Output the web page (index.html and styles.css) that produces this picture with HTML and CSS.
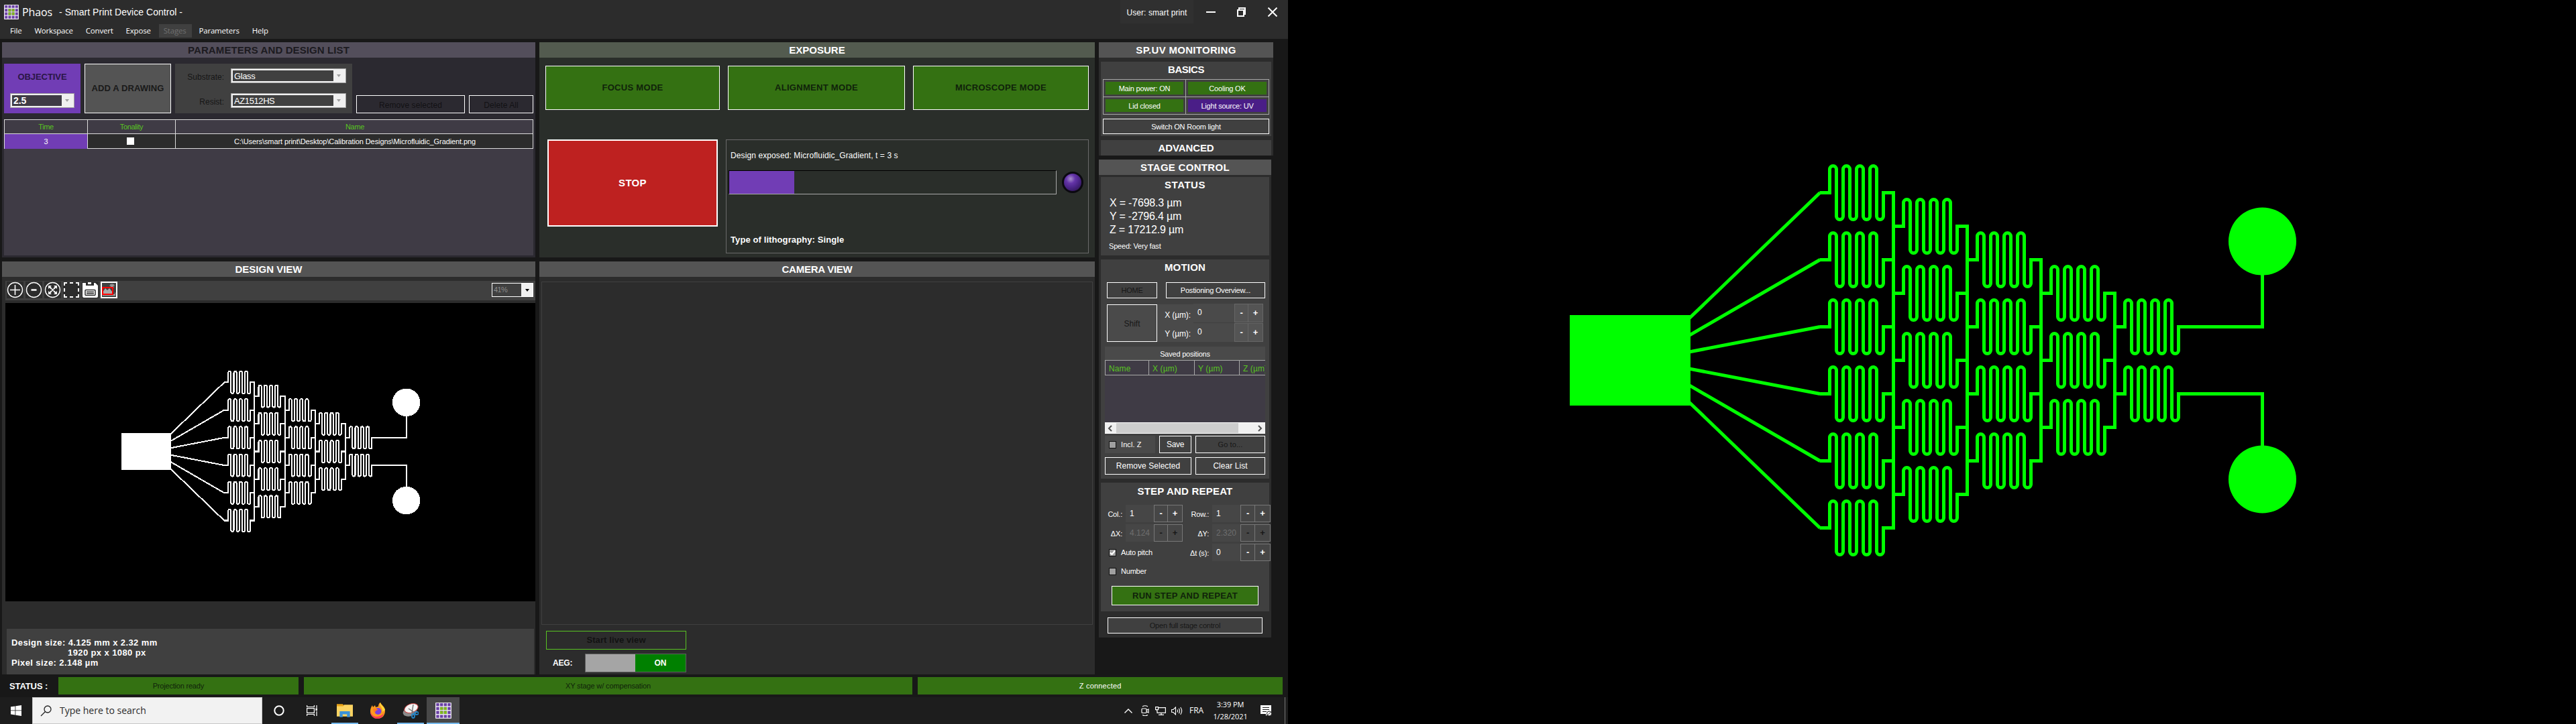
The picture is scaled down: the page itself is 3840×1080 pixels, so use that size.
FILE: index.html
```html
<!DOCTYPE html>
<html lang="en">
<head>
<meta charset="utf-8">
<title>Phaos - Smart Print Device Control</title>
<link rel="stylesheet" href="styles.css">
</head>
<body>
<svg class="defs" width="0" height="0">
  <defs>
    <path id="mixer" d="M-15 0H0V-35a5 5 0 0 1 10 0V35a5 5 0 0 0 10 0V-35a5 5 0 0 1 10 0V35a5 5 0 0 0 10 0V-35a5 5 0 0 1 10 0V35a5 5 0 0 0 10 0V-35a5 5 0 0 1 10 0V35a5 5 0 0 0 10 0V0H95"/>
    <symbol id="chip" viewBox="0 0 1920 1080" preserveAspectRatio="none">
      <rect x="420" y="470" width="180" height="135" fill="currentColor"/>
      <circle cx="1452.5" cy="360" r="50.5" fill="currentColor"/>
      <circle cx="1452.5" cy="715" r="50.5" fill="currentColor"/>
      <g fill="none" stroke="currentColor" stroke-width="5">
        <path d="M598 475L793 287.500M598 500.300L793 387.500M598 525L793 487.500M598 550L793 587.500M598 574.700L793 687.500M598 600L793 787.500"/>
        <path stroke-linecap="square" d="M902.500 287.500V787.500M1012.500 337.500V737.500M1122.500 387.500V687.500M1232.500 437.500V637.500"/>
        <path d="M1327.500 487.500H1452.500V400M1327.500 587.500H1452.500V675"/>
        <use href="#mixer" x="807.5" y="287.5"/><use href="#mixer" x="807.5" y="387.5"/><use href="#mixer" x="807.5" y="487.5"/><use href="#mixer" x="807.5" y="587.5"/><use href="#mixer" x="807.5" y="687.5"/><use href="#mixer" x="807.5" y="787.5"/>
        <use href="#mixer" x="917.5" y="337.5"/><use href="#mixer" x="917.5" y="437.5"/><use href="#mixer" x="917.5" y="537.5"/><use href="#mixer" x="917.5" y="637.5"/><use href="#mixer" x="917.5" y="737.5"/>
        <use href="#mixer" x="1027.5" y="387.5"/><use href="#mixer" x="1027.5" y="487.5"/><use href="#mixer" x="1027.5" y="587.5"/><use href="#mixer" x="1027.5" y="687.5"/>
        <use href="#mixer" x="1137.5" y="437.5"/><use href="#mixer" x="1137.5" y="537.5"/><use href="#mixer" x="1137.5" y="637.5"/>
        <use href="#mixer" x="1247.5" y="487.5"/><use href="#mixer" x="1247.5" y="587.5"/>
      </g>
    </symbol>
    <symbol id="logo" viewBox="0 0 24 24">
      <rect width="24" height="24" rx="1" fill="#e8e4ee"/>
      <path d="M3.500 1v22M9.200 1v22M14.900 1v22M20.500 1v22" stroke="#6a3fa5" stroke-width="4.300" stroke-dasharray="4.300 1.500"/>
      <path d="M9.200 6.800v10.100M14.900 6.800v10.100" stroke="#7fb51f" stroke-width="4.300" stroke-dasharray="4.300 1.500"/>
    </symbol>
  </defs>
</svg>

<main class="desktop">
  <header class="titlebar">
    <div class="title-row">
      <svg class="app-logo"><use href="#logo"/></svg>
      <span class="app-name">Phaos</span>
      <span class="app-sub">- Smart Print Device Control -</span>
      <span class="user">User: smart print</span>
      <svg class="winbtns" viewBox="0 0 106 14" fill="none" stroke="#fff" stroke-width="2"><path d="M0 7H14"/><path d="M47 4h9v9h-9zM49 3.500V1h9v9h-2"/><path d="M92.500 .5l13 13M105.500 .5l-13 13"/></svg>
    </div>
    <nav class="menu"><span>File</span><span>Workspace</span><span>Convert</span><span>Expose</span><span class="open">Stages</span><span>Parameters</span><span>Help</span></nav>
  </header>

  <div class="workspace">
    <div class="column col-left">
      <section class="panel params">
        <h2>PARAMETERS AND DESIGN LIST</h2>
        <div class="param-row">
          <div class="objective"><b>OBJECTIVE</b><div class="combo"><span class="combo-value">2.5</span><i class="tri"></i></div></div>
          <button class="add">ADD A DRAWING</button>
          <div class="materials">
            <label>Substrate:</label><div class="combo"><span class="combo-value">Glass</span><i class="tri"></i></div>
            <label>Resist:</label><div class="combo"><span class="combo-value">AZ1512HS</span><i class="tri"></i></div>
          </div>
          <button class="ghost remove">Remove selected</button>
          <button class="ghost delete">Delete All</button>
        </div>
        <div class="design-table">
          <div class="tr th"><span>Time</span><span>Tonality</span><span>Name</span></div>
          <div class="tr"><span class="time">3</span><span><i class="tone"></i></span><span>C:\Users\smart print\Desktop\Calibration Designs\Microfluidic_Gradient.png</span></div>
        </div>
      </section>
      <section class="panel design">
        <h2>DESIGN VIEW</h2>
        <div class="toolbar">
          <svg viewBox="0 0 25 25" fill="none" stroke="#fff" stroke-width="1.400"><circle cx="12.500" cy="12.500" r="11"/><path stroke-width="1.600" d="M12.500 5v15M5 12.500h15"/></svg>
          <svg viewBox="0 0 25 25" fill="none" stroke="#fff" stroke-width="1.400"><circle cx="12.500" cy="12.500" r="11"/><path stroke-width="2.500" d="M8.500 12.500h8"/></svg>
          <svg viewBox="0 0 25 25" fill="none" stroke="#fff" stroke-width="1.400"><circle cx="12.500" cy="12.500" r="11"/><path stroke-width="2" d="M7 7l4 4M18 7l-4 4M7 18l4-4M18 18l-4-4"/><path fill="#fff" stroke="none" d="M6 6h5l-5 5zM19 6v5l-5-5zM6 19v-5l5 5zM19 19h-5l5-5zM12.500 10.500l2 2-2 2-2-2z"/></svg>
          <svg viewBox="0 0 25 25" fill="none" stroke="#fff" stroke-width="2"><path d="M2 6V2h4M10 2h5M19 2h4v4M23 10v5M23 19v4h-4M15 23h-5M6 23H2v-4M2 15v-5"/></svg>
          <svg viewBox="0 0 25 25"><path fill="#fff" d="M1 2h5v4h12V2h2l4 4v16q0 2-2 2H3q-2 0-2-2z"/><path fill="#fff" d="M9 1h5v3H9z"/><rect x="5" y="12.500" width="15" height="8" rx="1" fill="#fff" stroke="#2c2c2c" stroke-width="1.500"/><path stroke="#2c2c2c" stroke-width="1.500" d="M7 15.500h11M7 18h11"/></svg>
          <svg viewBox="0 0 25 25"><rect x="1" y="1" width="23" height="23" fill="#404040" stroke="#fff" stroke-width="2"/><path stroke="#999" stroke-width="1.300" d="M17 3v7M13.500 6h7M14.500 4l5 5M19.500 4l-5 5"/><path fill="#aaa" d="M3 16l4-6 3 3 3-3 5 6v2H3zM3 19h18v-3l1 1v4H3z"/><rect x="3" y="9" width="15" height="10" fill="none" stroke="#f00" stroke-width="2"/></svg>
          <div class="zoom"><span>41%</span><i class="tri"></i></div>
        </div>
        <svg class="preview" viewBox="0 0 1920 1080" preserveAspectRatio="none"><use href="#chip" width="1920" height="1080"/></svg>
        <div class="info"><span>Design size: 4.125 mm x 2.32 mm</span><span class="indent">1920 px x 1080 px</span><span>Pixel size: 2.148 µm</span></div>
      </section>
    </div>

    <div class="column col-mid">
      <section class="panel exposure">
        <h2>EXPOSURE</h2>
        <div class="modes"><button>FOCUS MODE</button><button>ALIGNMENT MODE</button><button>MICROSCOPE MODE</button></div>
        <div class="expose-row">
          <button class="stop">STOP</button>
          <div class="job">
            <span>Design exposed: Microfluidic_Gradient, t = 3 s</span>
            <div class="job-progress"><div class="track"><div class="fill" style="width:20%"></div></div><i class="led"></i></div>
            <b>Type of lithography: Single</b>
          </div>
        </div>
      </section>
      <section class="panel camera">
        <h2>CAMERA VIEW</h2>
        <div class="feed"></div>
        <button class="live">Start live view</button>
        <div class="aeg"><b>AEG:</b><div class="toggle"><i></i><span>ON</span></div></div>
      </section>
    </div>

    <div class="column col-right">
      <section class="panel monitoring">
        <h2>SP.UV MONITORING</h2>
        <div class="box basics">
          <h3>BASICS</h3>
          <div class="lamps">
            <div><span>Main power: ON</span></div><div><span>Cooling OK</span></div>
            <div><span>Lid closed</span></div><div><span class="uv">Light source: UV</span></div>
          </div>
          <button class="ghost room">Switch ON Room light</button>
        </div>
        <div class="box advanced"><h3>ADVANCED</h3></div>
      </section>
      <section class="panel stage">
        <h2>STAGE CONTROL</h2>
        <div class="box position">
          <h3>STATUS</h3>
          <span class="axis">X = -7698.3 µm</span><span class="axis">Y = -2796.4 µm</span><span class="axis">Z = 17212.9 µm</span>
          <span class="speed">Speed: Very fast</span>
        </div>
        <div class="box motion">
          <h3>MOTION</h3>
          <div class="motion-top"><button class="ghost off home">HOME</button><button class="ghost overview">Postioning Overview...</button></div>
          <div class="shift-row">
            <button class="shift">Shift</button>
            <div class="shift-labels"><span>X (µm):</span><span>Y (µm):</span></div>
            <div class="shift-inputs"><div class="spin"><span>0</span><b>-</b><b>+</b></div><div class="spin"><span>0</span><b>-</b><b>+</b></div></div>
          </div>
          <div class="saved">
            <div class="saved-title">Saved positions</div>
            <div class="saved-head"><span>Name</span><span>X (µm)</span><span>Y (µm)</span><span>Z (µm)</span></div>
            <div class="saved-body"></div>
            <div class="scroll"><svg viewBox="0 0 8 10"><path d="M6 1L2 5l4 4" fill="none" stroke="#505050" stroke-width="2"/></svg><i></i><svg viewBox="0 0 8 10"><path d="M2 1l4 4-4 4" fill="none" stroke="#505050" stroke-width="2"/></svg></div>
          </div>
          <div class="save-row"><label><i class="check"></i><span>Incl. Z</span></label><button class="ghost save">Save</button><button class="ghost off">Go to...</button></div>
          <div class="list-row"><button class="ghost">Remove Selected</button><button class="ghost">Clear List</button></div>
        </div>
        <div class="box repeat">
          <h3>STEP AND REPEAT</h3>
          <div class="repeat-grid">
            <span class="lbl">Col.:</span><div class="spin"><span>1</span><b>-</b><b>+</b></div>
            <span class="lbl">Row.:</span><div class="spin wide"><span>1</span><b>-</b><b>+</b></div>
            <span class="lbl">ΔX:</span><div class="spin dim"><span>4.1249</span><b>-</b><b>+</b></div>
            <span class="lbl">ΔY:</span><div class="spin wide dim"><span>2.3203</span><b>-</b><b>+</b></div>
            <label><i class="check"><svg viewBox="0 0 9 9"><path d="M1 4.500L3.500 7 8 1.500" fill="none" stroke="#fff" stroke-width="2"/></svg></i><span>Auto pitch</span></label>
            <span class="lbl">Δt (s):</span><div class="spin wide"><span>0</span><b>-</b><b>+</b></div>
          </div>
          <label class="number"><i class="check"></i><span>Number</span></label>
          <button class="run">RUN STEP AND REPEAT</button>
        </div>
        <button class="ghost off fullstage">Open full stage control</button>
      </section>
    </div>
  </div>

  <div class="statusbar"><b>STATUS :</b><span class="projection-state">Projection ready</span><span class="xy-state">XY stage w/ compensation</span><span class="z-state">Z connected</span></div>

  <footer class="taskbar">
    <svg class="start" viewBox="0 0 16 16" fill="#fff"><path d="M0 2.300l6.500-.9v6.100H0zM7.300 1.300L16 0v7.500H7.300zM0 8.300h6.500v6.200L0 13.600zM7.300 8.300H16V16l-8.700-1.300z"/></svg>
    <div class="search"><svg viewBox="0 0 17 17" fill="none" stroke="#222" stroke-width="1.300"><circle cx="11" cy="6" r="5"/><path d="M7.500 9.500L1 16"/></svg><span>Type here to search</span></div>
    <div class="task"><svg viewBox="0 0 16 16"><circle cx="8" cy="8" r="6.700" fill="none" stroke="#fff" stroke-width="2"/></svg></div>
    <div class="task"><svg viewBox="0 0 16 16" fill="none" stroke="#fff" stroke-width="1.200"><path d="M.6 0v2.500h10.800V0M.6 16v-2.500h10.800V16M.6 4.700h10.800v6.600H.6zM15 0v4M15 9v7"/><path fill="#fff" d="M14 5h2v2.500h-2z"/></svg></div>
    <div class="task running"><svg class="big" viewBox="0 0 22 18"><path fill="#e8a317" d="M0 0h8l2 2v4H0z"/><path fill="#fcd462" d="M0 3h9l1-2h12v16H0z"/><path fill="#3b92d8" d="M4 10h14v8h-4v-4H8v4H4z"/></svg></div>
    <div class="task"><svg class="big" viewBox="0 0 24 24"><path fill="#ff9a1f" d="M12 24C5 24 1 19 1 13c0-3 1-6 3-9l1 3 3-3 1 3q3-1 4-1c0-3 1-5 3-6 1 3 7 6 7 12 0 7-4 12-11 12z"/><path fill="#ff3b53" d="M12 24C5 24 1 19 1 13q2 7 8 8 8 0 12-5-2 8-9 8z"/><path fill="#ffd93c" d="M15 1c0 5 5 6 4 13l4-3C22 6 17 5 16 0z"/><circle cx="12.500" cy="13" r="5" fill="#7a3fe0"/><path fill="#ff7b20" d="M5 9q5-1 8 2-4 0-5 4-3-2-3-6z"/></svg></div>
    <div class="task running"><svg class="big" viewBox="0 0 24 24"><ellipse cx="11" cy="14" rx="10.500" ry="6.500" fill="#8b8b8b" transform="rotate(-12 11 14)"/><ellipse cx="13" cy="8.500" rx="10.500" ry="6.500" fill="#f4f4f4" stroke="#c84040" transform="rotate(-20 13 8.500)"/><path stroke="#777" stroke-width="1.500" d="M16 3l-2 13M9 9l9 6"/><g fill="none" stroke="#2383c4" stroke-width="1.800"><ellipse cx="16" cy="20" rx="2" ry="3"/><ellipse cx="21" cy="16" rx="3" ry="2"/></g></svg></div>
    <div class="task current"><svg class="big"><use href="#logo"/></svg></div>
    <div class="tray">
      <svg class="chev" viewBox="0 0 12 7" fill="none" stroke="#fff" stroke-width="1.400"><path d="M.5 6.500L6 1l5.500 5.500"/></svg>
      <svg class="meet" viewBox="0 0 12 16" fill="none" stroke="#fff" stroke-width="1.200"><rect x="1" y="5" width="7" height="6.500" rx="1"/><path d="M8 7.500l3-1.500v5l-3-1.500M2 2q4-2.500 8 0M2 14.500q4 2.500 8 0"/></svg>
      <svg class="net" viewBox="0 0 16 13" fill="none" stroke="#fff" stroke-width="1.200"><path d="M5 1.600h10.400v7.800H3V6M9 9.400V12M5 12.400h8M.6.6h4v4h-4zM2.600 4.600V7"/></svg>
      <svg class="vol" viewBox="0 0 17 13" fill="none" stroke="#fff" stroke-width="1.100"><path d="M.6 4.500H3L6.500 1v11L3 8.500H.6zM9 4.500q1.300 2 0 4M11.300 2.700q2.500 3.800 0 7.600M13.700 1q4 5.500 0 11"/></svg>
      <span class="lang">FRA</span>
      <div class="clock"><span>3:39 PM</span><span>1/28/2021</span></div>
      <svg class="notif" viewBox="0 0 17 17"><path fill="#fff" d="M0 0h16v13h-5l-3 3v-3H0z"/><path stroke="#1d1d1d" stroke-width="1.200" d="M3 3.500h10M3 6.500h10M3 9.500h6"/><circle cx="13" cy="12.500" r="3.500" fill="#fff" stroke="#1d1d1d"/><path stroke="#1d1d1d" d="M11 14.500l4-4"/></svg>
    </div>
  </footer>
</main>

<svg class="projection" viewBox="0 0 1920 1080"><use href="#chip" width="1920" height="1080"/></svg>
</body>
</html>
```
FILE: styles.css
```css
* { box-sizing: border-box; }
body { margin: 0; width: 3840px; height: 1080px; overflow: hidden; display: flex; background: #000; color: #fff; font: 11px/16px "Liberation Sans", Arial, sans-serif; letter-spacing: -.2px; white-space: nowrap; }
.defs { position: absolute; }
h2, h3 { margin: 0; text-align: center; font-weight: bold; }
i { font-style: normal; }
button { font: inherit; letter-spacing: inherit; color: inherit; padding: 0; border: 1px solid #fff; border-radius: 0; background: #404040; display: flex; align-items: center; justify-content: center; white-space: nowrap; }
svg { display: block; flex: none; }

.desktop { width: 1920px; height: 1080px; display: flex; flex-direction: column; background: #181818; }
.projection { width: 1920px; height: 1080px; color: #0f0; background: #000; }

/* Title bar and menu */
.titlebar { height: 58px; background: #2c2c2c; }
.title-row { height: 36px; padding-left: 6px; display: flex; align-items: center; }
.app-logo { width: 22px; height: 22px; }
.app-name { margin-left: 5px; width: 55px; font: 16px/22px "Open Sans", sans-serif; letter-spacing: -.1px; }
.app-sub { font-size: 14px; letter-spacing: .04px; }
.user { margin-left: auto; width: 109px; height: 35px; background: #303030; display: flex; align-items: center; justify-content: center; align-self: flex-start; padding-top: 3px; font-size: 12px; letter-spacing: .08px; }
.winbtns { width: 106px; height: 14px; margin: 0 16px 0 19px; }
.menu { display: flex; gap: 19px; padding-left: 15px; height: 20px; font: 11.5px/20px "Open Sans", sans-serif; letter-spacing: -.2px; }
.menu .open { background: #404040; color: #707070; padding: 0 9px 0 7px; margin: 0 -9px 0 -7px; }

/* Workspace */
.workspace { flex: none; height: 948px; padding: 5px 0 0 3px; display: flex; gap: 6px; }
.column { display: flex; flex-direction: column; gap: 6px; }
.col-left { width: 795px; }
.col-mid { width: 828px; }
.col-right { width: 260px; }
.panel { background: #2c2c2c; }
.panel > h2 { height: 23px; background: #545454; font-size: 15px; line-height: 24px; letter-spacing: 0; }
.params, .exposure { height: 321px; }
.design, .camera { height: 616px; }

.combo { border: 1px solid #a0a0a0; background: #f0f0f0; padding: 2px; height: 22px; display: flex; align-items: center; }
.combo-value { flex: 1; height: 16px; background: #404040; font-size: 13px; line-height: 17px; padding-left: 2px; letter-spacing: -.4px; }
.tri { width: 16px; display: flex; justify-content: center; }
.tri::after { content: ""; border: 3px solid transparent; border-top: 4px solid #a0a0a0; border-bottom: 0; }

.params { background: #2b2930; }
.params > h2 { background: #534e5b; color: #1c1a20; letter-spacing: .1px; }
.param-row { display: flex; gap: 6px; padding: 9px 3px; height: 92px; align-items: flex-end; }
.objective { width: 114px; height: 74px; background: #713db5; color: #2a1646; padding: 12px 9px 8px; display: flex; flex-direction: column; justify-content: space-between; text-align: center; font-size: 13px; letter-spacing: -.08px; }
.objective .combo { color: #fff; text-align: left; }
.objective .combo-value { background: #3f3b45; font-size: 14px; font-weight: bold; letter-spacing: -.1px; }
.add { width: 129px; height: 74px; background: #545454; color: #1a1a1a; font-size: 13px; font-weight: bold; letter-spacing: .1px; }
.materials { width: 264px; height: 74px; background: #404040; color: #161616; display: grid; grid-template-columns: 73px 172px; grid-auto-rows: 22px; gap: 15px 10px; padding-top: 7px; font-size: 12px; letter-spacing: 0; }
.materials label { text-align: right; line-height: 26px; }
.materials .combo { color: #fff; }
.ghost { background: transparent; }
.params .ghost { height: 27px; color: #121114; font-size: 12px; letter-spacing: .08px; padding-top: 3px; }
.remove { width: 162px; }
.delete { width: 96px; }
.design-table { margin: 0 3px; height: 203px; background: #3f3b45; letter-spacing: -.1px; }
.tr { display: grid; grid-template-columns: 123px 131px 535px; height: 22px; border: 1px solid #dcdcdc; border-top: 0; background: #2c2c2c; text-align: center; line-height: 22px; }
.tr.th { background: #3f3b45; color: #58c322; border-top: 1px solid #dcdcdc; line-height: 20px; letter-spacing: -.35px; }
.tr span + span { border-left: 1px solid #dcdcdc; }
.tr .time { background: #713db5; }
.tone { display: block; width: 11px; height: 11px; background: #fff; margin: 5px auto 0 58px; }

.toolbar { margin: 6px 0 0 5px; height: 29px; background: #404040; display: flex; align-items: center; gap: 3px; padding: 0 3px 2px 2px; }
.toolbar > svg { width: 25px; height: 25px; background: #2c2c2c; }
.zoom { margin-left: auto; width: 62px; height: 21px; border: 1px solid #fff; background: #404040; color: #8c8c8c; display: flex; justify-content: space-between; padding-left: 2px; line-height: 19px; letter-spacing: -.6px; }
.zoom .tri { width: 17px; background: #f0f0f0; align-items: center; }
.zoom .tri::after { border-top-color: #000; }
.preview { margin: 4px 0 0 5px; width: 790px; height: 445px; background: #000; shape-rendering: crispEdges; }
.info { margin: 41px 2px 0 7px; height: 68px; background: #404040; padding: 13px 0 0 7px; display: flex; flex-direction: column; font-size: 13px; font-weight: bold; line-height: 15px; letter-spacing: .4px; }
.info .indent { padding-left: 84px; }

.exposure { background: #2a2e2a; }
.exposure > h2 { background: #535b4f; }
.modes { display: grid; grid-template-columns: 260px 264px 262px; gap: 12px; padding: 12px 9px 0; height: 122px; grid-auto-rows: 66px; }
.modes button { background: #347112; color: #10230a; font-size: 13px; font-weight: bold; letter-spacing: .3px; }
.expose-row { display: flex; gap: 12px; padding-left: 12px; }
.stop { width: 254px; height: 130px; border-width: 2px; background: #be2120; font-size: 15px; font-weight: bold; letter-spacing: .3px; }
.job { width: 541px; height: 170px; border: 1px solid #6a6a6a; padding: 15px 7px 11px 3px; display: flex; flex-direction: column; justify-content: space-between; font-size: 12px; letter-spacing: .1px; }
.job > span, .job > b { padding-left: 3px; }
.job > b { font-size: 13px; }
.job-progress { display: flex; align-items: center; gap: 8px; margin-bottom: 46px; }
.track { width: 489px; height: 36px; border: 1px solid #aaa; border-top-color: #000; border-left-color: #000; }
.fill { height: 100%; background: #713db5; }
.led { width: 32px; height: 32px; border-radius: 50%; border: 3px solid #0b0910; background: radial-gradient(circle at 38% 30%, #a78fca 0, #6434a8 28%, #4a2486 55%, #22103f 100%); }

.camera > h2 { letter-spacing: -.25px; }
.feed { margin: 7px 3px 0; height: 512px; border: 1px solid #404040; }
.live { margin: 9px 0 0 10px; width: 209px; height: 28px; border-color: #58c322; background: #2c2c2c; color: #121212; font-size: 13px; font-weight: bold; letter-spacing: .1px; }
.aeg { margin: 6px 0 0 20px; display: flex; align-items: center; height: 28px; font-size: 12px; }
.aeg > b { width: 48px; }
.toggle { width: 151px; height: 28px; display: flex; border: 1px solid #606060; background: #008000; font-weight: bold; align-items: center; letter-spacing: 0; }
.toggle i { width: 74px; height: 26px; background: #a5a5a5; }
.toggle span { flex: 1; text-align: center; }

/* Monitoring */
.col-right .panel > h2 { letter-spacing: .3px; }
.box { margin: 0 3px; background: #404040; }
.box h3 { font-size: 15px; line-height: 24px; letter-spacing: .2px; }
.box.basics h3 { letter-spacing: -.45px; }
.box.advanced h3 { letter-spacing: -.1px; }
.box.position h3 { letter-spacing: .5px; }
.monitoring { height: 169px; }
.basics { margin-top: 6px; height: 111px; padding: 0 3px; }
.lamps { margin: 2px 0 6px; display: grid; grid-template-columns: 123px 124px; grid-auto-rows: 26px; border: solid #a8a8a8; border-width: 0 1px 1px 0; height: 53px; }
.lamps div { border: solid #a8a8a8; border-width: 1px 0 0 1px; padding: 3px; }
.lamps span { display: block; height: 19px; line-height: 20px; background: #347112; text-align: center; }
.lamps .uv { background: #4a1e87; }
.room { width: 248px; height: 23px; }
.advanced { margin-top: 6px; height: 23px; }

/* Stage control */
.stage { width: 257px; height: 713px; }
.position { margin-top: 3px; height: 117px; display: flex; flex-direction: column; }
.axis { font-size: 16px; line-height: 20px; padding-left: 13px; }
.axis:nth-of-type(1) { margin-top: 5px; }
.speed { margin-top: 6px; padding-left: 12px; }
.motion { margin-top: 6px; height: 327px; padding: 0 6px; }
.off { color: #171717; }
.motion-top { display: flex; justify-content: space-between; padding-left: 3px; margin-top: 10px; }
.motion-top button { height: 24px; }
.home { width: 75px; }
.overview { width: 148px; }
.shift-row { display: flex; margin: 8px 0 0 3px; height: 57px; align-items: flex-end; }
.shift { width: 75px; height: 56px; background: #4a4a4a; color: #171717; padding-top: 2px; font-size: 12px; letter-spacing: 0; }
.shift-labels { width: 54px; height: 56px; background: #4a4a4a; display: flex; flex-direction: column; gap: 12px; padding: 8px 4px 0 0; text-align: right; font-size: 12px; letter-spacing: -.1px; }
.shift-inputs { width: 104px; display: flex; flex-direction: column; gap: 1px; }
.spin { display: grid; grid-template-columns: 1fr 21px 22px; height: 26px; background: #464646; }
.shift-inputs .spin { height: 28px; background: #4a4a4a; }
.spin span { padding-left: 6px; line-height: 26px; overflow: hidden; margin-right: 6px; font-size: 12px; letter-spacing: 0; }
.spin b { border: 1px solid #777; display: flex; align-items: center; justify-content: center; font-size: 13px; }
.shift-inputs b { background: #545454; border-color: #666; }
.spin b + b { margin-left: -1px; }
.spin.dim span { color: #6e6e6e; }
.spin.dim b { color: #161616; }
.saved { margin-top: 7px; height: 130px; background: #3f3b45; display: flex; flex-direction: column; overflow: hidden; }
.saved-title { height: 20px; line-height: 22px; background: #4a4a4a; text-align: center; }
.saved-head { display: flex; height: 23px; border: solid #a8a8a8; border-width: 1px 0; color: #58c322; line-height: 25px; overflow: hidden; font-size: 12px; letter-spacing: .1px; }
.saved-head span { flex: none; width: 67px; border-left: 1px solid #a8a8a8; padding-left: 5px; }
.saved-head span:first-child { width: 65px; }
.saved-head span:nth-child(2) { width: 68px; }
.saved-body { flex: 1; }
.scroll { height: 17px; background: #f0f0f0; display: flex; align-items: center; border: solid #fff; border-width: 1px 0; padding: 0 4px; }
.scroll svg { width: 8px; height: 10px; }
.scroll i { width: 182px; height: 15px; background: #cdcdcd; margin: 0 auto 0 5px; }
.save-row { margin-top: 3px; display: grid; grid-template-columns: 75px 48px 104px; gap: 6px; height: 26px; letter-spacing: .1px; }
.save-row .save { font-size: 12px; letter-spacing: -.3px; }
.save-row label { background: #4a4a4a; display: flex; align-items: center; gap: 7px; padding-left: 6px; }
.check { width: 11px; height: 11px; border: 1px solid #111; background: #a0a0a0; }
.list-row { margin-top: 6px; display: grid; grid-template-columns: 129px 104px; gap: 6px; height: 26px; font-size: 12px; letter-spacing: .05px; }

.repeat { margin-top: 6px; height: 192px; padding-top: 1px; }
.repeat-grid { margin-top: 8px; display: grid; grid-template-columns: 32px 85px 34px 87px; grid-auto-rows: 26px; gap: 3px 5px; }
.repeat-grid .lbl { text-align: right; line-height: 28px; }
.repeat-grid label { grid-column: span 2; }
.repeat label { display: flex; gap: 7px; align-items: center; padding-left: 12px; }
.spin.wide { grid-template-columns: 1fr 22px 23px; }
.number { margin-top: 7px; }
.run { margin: 14px 0 0 16px; width: 219px; height: 29px; background: #347112; color: #10230a; font-size: 13px; font-weight: bold; letter-spacing: .25px; }
.fullstage { margin: 9px 0 0 13px; width: 231px; height: 24px; background: #404040; }

/* Status bar */
.statusbar { height: 34px; flex: none; display: flex; padding: 4px 0 4px 14px; line-height: 27px; }
.statusbar b { width: 73px; font-size: 13px; letter-spacing: -.1px; }
.statusbar span { background: #347112; text-align: center; color: #10230a; margin-right: 8px; }
.projection-state { width: 358px; }
.xy-state { width: 908px; letter-spacing: -.12px; }
.statusbar .z-state { width: 544px; color: #fff; letter-spacing: .2px; }

/* Taskbar */
.taskbar { height: 40px; background: #1d1d1d; display: flex; align-items: center; font-family: "Open Sans", sans-serif; letter-spacing: -.1px; }
.start { width: 16px; height: 16px; margin: 0 16px; }
.search { width: 343px; height: 40px; background: #f2f2f2; border: 1px solid #c8c8c8; color: #2a2a2a; display: flex; align-items: center; gap: 12px; padding-left: 11px; font-size: 14px; letter-spacing: 0; }
.search svg { width: 17px; height: 17px; }
.task { width: 49px; height: 40px; display: flex; align-items: center; justify-content: center; }
.task svg { width: 16px; height: 16px; }
.task svg.big { width: 24px; height: 24px; }
.running { background: linear-gradient(#76b9ed, #76b9ed) center bottom / 40px 2px no-repeat; }
.current { background: #484848; box-shadow: inset 0 -2px #76b9ed; }
.tray { margin-left: auto; display: flex; align-items: center; height: 40px; border-right: 1px solid #777; margin-right: 4px; padding-right: 19px; }
.chev { width: 12px; height: 7px; margin-right: 13px; }
.meet { width: 12px; height: 16px; margin-right: 9px; }
.net { width: 16px; height: 13px; margin-right: 8px; }
.vol { width: 17px; height: 13px; margin-right: 10px; }
.lang { font-size: 12px; }
.clock { width: 60px; margin: 0 15px 0 10px; display: flex; flex-direction: column; align-items: center; line-height: 18px; }
.notif { width: 17px; height: 17px; }
```
